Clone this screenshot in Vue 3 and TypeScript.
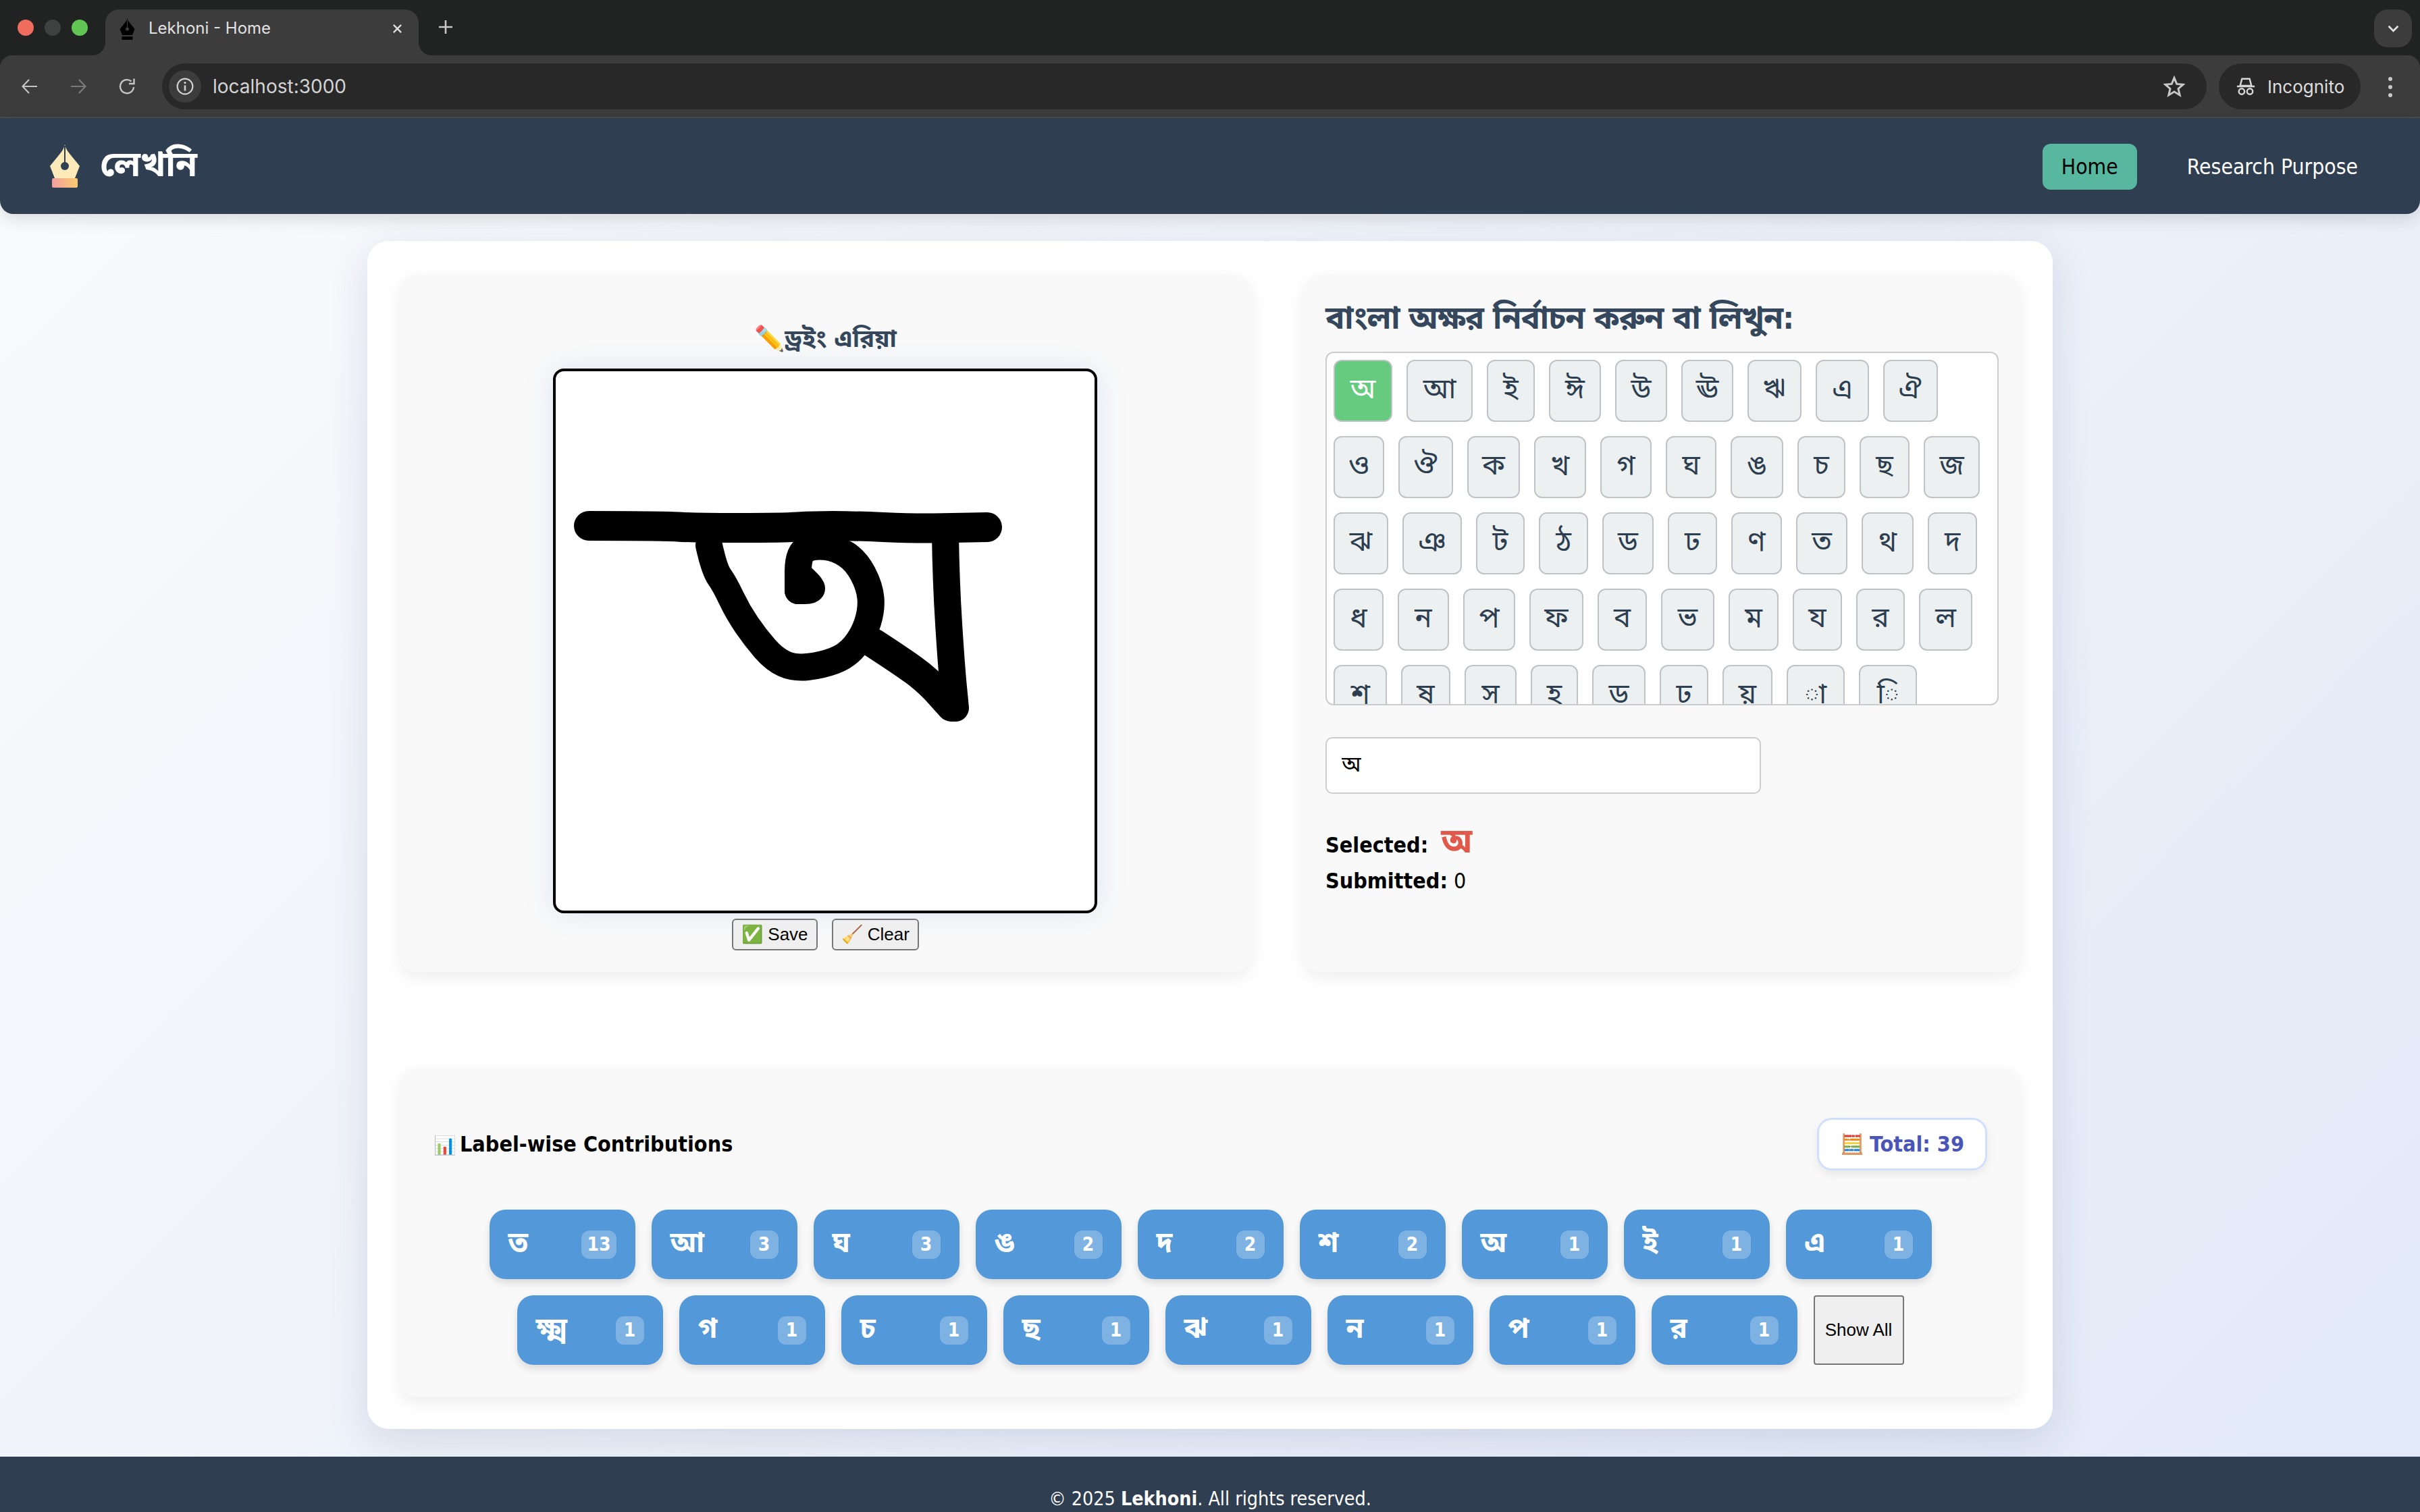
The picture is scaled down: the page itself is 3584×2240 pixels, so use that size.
<script setup lang="ts">
interface Letter {
	ch: string
	w: number
}

interface Chip {
	label: string
	count: number
}

interface Stroke {
	d: string
	width: number
}

type Point = [number, number]

const letter = (ch: string, w: number): Letter => ({ ch, w })

const letters: Letter[] = [
	letter("অ", 87), letter("আ", 98), letter("ই", 71), letter("ঈ", 77), letter("উ", 77), letter("ঊ", 77), letter("ঋ", 80), letter("এ", 79), letter("ঐ", 81),
	letter("ও", 75), letter("ঔ", 81), letter("ক", 78), letter("খ", 77), letter("গ", 76), letter("ঘ", 75), letter("ঙ", 78), letter("চ", 71), letter("ছ", 74), letter("জ", 83),
	letter("ঝ", 81), letter("ঞ", 88), letter("ট", 72), letter("ঠ", 73), letter("ড", 76), letter("ঢ", 73), letter("ণ", 75), letter("ত", 76), letter("থ", 77), letter("দ", 73),
	letter("ধ", 74), letter("ন", 76), letter("প", 77), letter("ফ", 80), letter("ব", 73), letter("ভ", 79), letter("ম", 74), letter("য", 73), letter("র", 72), letter("ল", 79),
	letter("শ", 79), letter("ষ", 73), letter("স", 77), letter("হ", 70), letter("ড়", 79), letter("ঢ়", 72), letter("য়", 74), letter("া", 86), letter("ি", 86),
]

const chips: Chip[] = [
	{ label: "ত", count: 13 }, { label: "আ", count: 3 }, { label: "ঘ", count: 3 },
	{ label: "ঙ", count: 2 }, { label: "দ", count: 2 }, { label: "শ", count: 2 },
	{ label: "অ", count: 1 }, { label: "ই", count: 1 }, { label: "এ", count: 1 },
	{ label: "ক্ষ্ম", count: 1 }, { label: "গ", count: 1 }, { label: "চ", count: 1 },
	{ label: "ছ", count: 1 }, { label: "ঝ", count: 1 }, { label: "ন", count: 1 },
	{ label: "প", count: 1 }, { label: "র", count: 1 },
]

// turns the sampled pen positions into a smooth stroke, like the drawing canvas does
const smooth = (pts: Point[]): string => {
	let d = `M${pts[0][0]} ${pts[0][1]}`
	for (let i = 1; i < pts.length - 1; i++) {
		const mx = (pts[i][0] + pts[i + 1][0]) / 2
		const my = (pts[i][1] + pts[i + 1][1]) / 2
		d += ` Q${pts[i][0]} ${pts[i][1]} ${mx} ${my}`
	}
	const last = pts[pts.length - 1]
	return `${d} L${last[0]} ${last[1]}`
}

const strokes: Stroke[] = [
	{ width: 44, d: smooth([[49, 229], [158, 229], [204, 232], [336, 232], [382, 229], [439, 229], [531, 233], [589, 232], [639, 231]]) },
	{ width: 40, d: smooth([[227, 258], [235, 294], [250, 315], [270, 357], [296, 395], [324, 427], [353, 440], [393, 436], [431, 422], [456, 391], [468, 353], [465, 319], [445, 281], [416, 262], [382, 258], [359, 269], [359, 325]]) },
	{ width: 40, d: smooth([[359, 300], [379, 318], [379, 325], [359, 325]]) },
	{ width: 44, d: smooth([[471, 403], [511, 429], [551, 458], [586, 497]]) },
	{ width: 40, d: smooth([[577, 243], [578, 311], [586, 437], [592, 499]]) },
]
</script>

<template>
	<div class="browser">
		<div class="tabstrip">
			<div class="lights">
				<span class="light red"></span>
				<span class="light grey"></span>
				<span class="light green"></span>
			</div>
			<div class="tab">
				<svg class="favicon" viewBox="0 0 44 64">
					<path d="M22 0 C24 8 27 11 31 16 L44 32 L37 50 H7 L0 32 L13 16 C17 11 20 8 22 0 Z" fill="#000" />
					<path d="M22 4 V28" stroke="#3c3c3c" stroke-width="2" />
					<circle cx="22" cy="32" r="5" fill="#3c3c3c" />
					<rect x="6" y="54" width="32" height="10" fill="#000" />
				</svg>
				<span class="tab-title">Lekhoni - Home</span>
				<svg class="tab-close" viewBox="0 0 16 16">
					<path d="M2 2 L14 14 M14 2 L2 14" stroke="#e0e0e0" stroke-width="2.4" fill="none" />
				</svg>
			</div>
			<svg class="tab-new" viewBox="0 0 20 20">
				<path d="M10 0 V20 M0 10 H20" stroke="#c8c8c8" stroke-width="2.6" fill="none" />
			</svg>
			<div class="tab-menu">
				<svg viewBox="0 0 16 10" width="17" height="11">
					<path d="M1.5 1.5 L8 8 L14.5 1.5" stroke="#e0e0e0" stroke-width="2.6" fill="none" />
				</svg>
			</div>
		</div>
		<div class="toolbar">
			<svg class="tool" viewBox="0 0 24 24">
				<path d="M23 12 H2 M11 2 L1.5 12 L11 22" stroke="#c4c4c4" stroke-width="2.2" fill="none" />
			</svg>
			<svg class="tool" viewBox="0 0 24 24">
				<path d="M1 12 H22 M13 2 L22.5 12 L13 22" stroke="#7b7b7b" stroke-width="2.2" fill="none" />
			</svg>
			<svg class="tool" viewBox="0 0 24 24">
				<path d="M22 13 A10 10 0 1 1 18.5 4.5 M22.5 0.5 V8 H15" stroke="#c4c4c4" stroke-width="2.4" fill="none" />
			</svg>
			<div class="omnibox">
				<span class="site-info">
					<svg viewBox="0 0 24 24" width="26" height="26">
						<circle cx="12" cy="12" r="10.5" stroke="#d0d0d0" stroke-width="2" fill="none" />
						<path d="M12 10.5 V18" stroke="#d0d0d0" stroke-width="2.4" />
						<circle cx="12" cy="7" r="1.5" fill="#d0d0d0" />
					</svg>
				</span>
				<span class="url">localhost:3000</span>
				<svg class="star" viewBox="0 0 24 24">
					<path d="M12 2.5 L14.8 9.3 L22 9.9 L16.5 14.6 L18.2 21.7 L12 17.9 L5.8 21.7 L7.5 14.6 L2 9.9 L9.2 9.3 Z" stroke="#c8c8c8" stroke-width="2.2" fill="none" />
				</svg>
			</div>
			<div class="incognito">
				<svg viewBox="0 0 30 30" width="28" height="28">
					<path d="M9 3 H21 L24 14 H6 Z M1 15 H29" stroke="#d8d8d8" stroke-width="2.6" fill="none" />
					<circle cx="8.5" cy="23" r="4.5" stroke="#d8d8d8" stroke-width="2.6" fill="none" />
					<circle cx="21.5" cy="23" r="4.5" stroke="#d8d8d8" stroke-width="2.6" fill="none" />
				</svg>
				<span>Incognito</span>
			</div>
			<div class="dots"><i></i><i></i><i></i></div>
		</div>
	</div>

	<nav class="navbar">
		<div class="brand">
			<svg class="brand-logo" viewBox="0 0 44 64">
				<defs>
					<linearGradient id="nibBase" x1="0" y1="0" x2="1" y2="0">
						<stop offset="0" stop-color="#f29da0" />
						<stop offset="1" stop-color="#f9cc6c" />
					</linearGradient>
				</defs>
				<path d="M22 0 C24 8 27 11 31 16 L44 32 L37 50 H7 L0 32 L13 16 C17 11 20 8 22 0 Z" fill="#fdeab9" />
				<path d="M22 2 V28" stroke="#324054" stroke-width="2" />
				<circle cx="22" cy="32" r="6" fill="#324054" />
				<rect x="3" y="50" width="38" height="14" rx="2" fill="url(#nibBase)" />
			</svg>
			<span class="brand-name">লেখনি</span>
		</div>
		<div class="nav-links">
			<a class="nav-link active">Home</a>
			<a class="nav-link">Research Purpose</a>
		</div>
	</nav>

	<main class="page-card">
		<div class="top-row">
			<section class="panel draw-panel">
				<h2 class="draw-title">✏️ড্রইং এরিয়া</h2>
				<div class="canvas">
					<svg viewBox="0 0 798 799" width="798" height="799" fill="none" stroke="#000" stroke-linecap="round" stroke-linejoin="round">
						<path v-for="(s, i) in strokes" :key="i" :d="s.d" :stroke-width="s.width" />
					</svg>
				</div>
				<div class="draw-actions">
					<button class="native-btn">✅ Save</button>
					<button class="native-btn">🧹 Clear</button>
				</div>
			</section>

			<section class="panel letter-panel">
				<h2 class="letter-title">বাংলা অক্ষর নির্বাচন করুন বা লিখুন:</h2>
				<div class="letter-grid">
					<button
						v-for="(item, i) in letters"
						:key="item.ch"
						class="letter-btn"
						:class="{ selected: i === 0 }"
						:style="{ width: item.w + 'px' }">
						{{ item.ch }}
					</button>
				</div>
				<input class="letter-input" type="text" value="অ" />
				<div class="status">
					<p class="status-line selected-line"><b>Selected:</b> <span class="selected-char">অ</span></p>
					<p class="status-line"><b>Submitted:</b> 0</p>
				</div>
			</section>
		</div>

		<section class="panel chips-panel">
			<header class="chips-head">
				<h3 class="chips-title"><span class="title-emoji">📊</span> Label-wise Contributions</h3>
				<div class="total-badge"><span class="total-emoji">🧮</span> Total: 39</div>
			</header>
			<div class="chips">
				<div v-for="chip in chips" :key="chip.label" class="chip">
					<span class="chip-label">{{ chip.label }}</span>
					<span class="chip-count">{{ chip.count }}</span>
				</div>
				<button class="native-btn show-all">Show All</button>
			</div>
		</section>
	</main>

	<footer class="footer">© 2025 <b>Lekhoni</b>. All rights reserved.</footer>
</template>

<style>
html,
body {
	margin: 0;
	height: 100%;
	overflow: hidden;
}

body {
	background: linear-gradient(135deg, #fafbfc 0%, #e2e9f7 100%);
}
</style>

<style scoped>
.browser {
	font-family: Inter, "Noto Sans", sans-serif;
	background: #212322;
}

.tabstrip {
	height: 82px;
	display: flex;
	align-items: flex-start;
	padding: 14px 12px 0 26px;
	box-sizing: border-box;
}

.lights {
	display: flex;
	gap: 16px;
	padding-top: 15px;
	margin-right: 26px;
}

.light {
	width: 24px;
	height: 24px;
	border-radius: 50%;
}

.red { background: #ef6c5f; }
.grey { background: #3f4140; }
.green { background: #61c554; }

.tab {
	position: relative;
	width: 464px;
	height: 68px;
	border-radius: 20px 20px 0 0;
	background: #3c3c3c;
	display: flex;
	align-items: flex-start;
	box-sizing: border-box;
	padding: 13px 24px 0 21px;
}

/* the flared corners where the tab meets the toolbar */
.tab::before,
.tab::after {
	content: "";
	position: absolute;
	bottom: 0;
	width: 20px;
	height: 20px;
}

.tab::before {
	left: -20px;
	background: radial-gradient(circle at 0 0, transparent 20px, #3c3c3c 20.5px);
}

.tab::after {
	right: -20px;
	background: radial-gradient(circle at 100% 0, transparent 20px, #3c3c3c 20.5px);
}

.favicon {
	width: 23px;
	height: 32px;
	margin-right: 20px;
}

.tab-title {
	flex: 1;
	font-size: 24px;
	line-height: 30px;
	color: #e2e2e2;
}

.tab-close {
	width: 15px;
	height: 15px;
	margin-top: 8px;
}

.tab-new {
	width: 20px;
	height: 20px;
	margin: 16px 0 0 30px;
}

.tab-menu {
	margin-left: auto;
	width: 56px;
	height: 56px;
	border-radius: 20px;
	background: #3c3c3c;
	display: flex;
	align-items: center;
	justify-content: center;
}

.toolbar {
	height: 93px;
	background: #3c3c3c;
	border-bottom: 2px solid #4a4a4a;
	border-radius: 18px 18px 0 0;
	box-sizing: border-box;
	display: flex;
	align-items: flex-start;
	padding: 12px 0 0 32px;
}

.tool {
	width: 24px;
	height: 24px;
	margin: 22px 48px 0 0;
}

.tool:nth-of-type(3) {
	margin-right: 46px;
}

.omnibox {
	flex: 0 0 3028px;
	height: 68px;
	border-radius: 34px;
	background: #282828;
	display: flex;
	align-items: center;
	padding: 0 32px 0 10px;
	box-sizing: border-box;
	margin-left: -6px;
}

.site-info {
	width: 48px;
	height: 48px;
	border-radius: 50%;
	background: #3c3c3c;
	display: flex;
	align-items: center;
	justify-content: center;
	margin-right: 17px;
}

.url {
	flex: 1;
	font-size: 28px;
	color: #d4d4d4;
}

.star {
	width: 32px;
	height: 32px;
}

.incognito {
	width: 210px;
	height: 68px;
	margin-left: 18px;
	border-radius: 34px;
	background: #282828;
	display: flex;
	align-items: center;
	gap: 18px;
	padding-left: 26px;
	box-sizing: border-box;
	font-size: 26px;
	color: #dedede;
}

.dots {
	display: flex;
	flex-direction: column;
	gap: 6px;
	margin: 20px 0 0 41px;
}

.dots i {
	width: 6px;
	height: 6px;
	border-radius: 50%;
	background: #c8c8c8;
}

.navbar {
	height: 142px;
	background: #2f3e50;
	border-radius: 0 0 20px 20px;
	box-shadow: 0 8px 24px rgba(0, 0, 0, 0.12);
	display: flex;
	align-items: center;
	justify-content: space-between;
	padding: 0 64px 0 74px;
	box-sizing: border-box;
}

.brand {
	display: flex;
	align-items: center;
	gap: 30px;
}

.brand-logo {
	width: 44px;
	height: 64px;
}

.brand-name {
	font-family: "Noto Sans Bengali", "Noto Sans", sans-serif;
	font-size: 52px;
	font-weight: 700;
	color: #fff;
	padding-top: 3px;
}

.nav-links {
	display: flex;
	align-items: center;
	gap: 46px;
	margin-top: 2px;
	font-family: "DejaVu Sans", sans-serif;
	font-stretch: condensed;
	font-size: 31.6px;
}

.nav-link {
	color: #fff;
	padding: 16px 28px;
	border-radius: 12px;
}

.nav-link.active {
	background: #58b89f;
	color: #000;
}

.page-card {
	width: 2496px;
	height: 1760px;
	margin: 40px auto 41px;
	background: #fff;
	border-radius: 32px;
	box-shadow: 0 16px 60px rgba(40, 60, 110, 0.14);
	box-sizing: border-box;
	padding: 50px 48px;
	font-family: "DejaVu Sans", "Noto Sans Bengali", sans-serif;
	font-stretch: condensed;
}

.top-row {
	display: grid;
	grid-template-columns: 1261px 1061px;
	column-gap: 78px;
}

.panel {
	background: #f9f9f9;
	border-radius: 24px;
	box-shadow: 0 8px 24px rgba(0, 0, 0, 0.07);
	box-sizing: border-box;
}

.draw-panel {
	height: 1033px;
	display: flex;
	flex-direction: column;
	align-items: center;
	padding-top: 70px;
}

.draw-title {
	margin: 0 0 44px;
	font-size: 36.5px;
	line-height: 50px;
	height: 25px;
	font-weight: 700;
	color: #34475c;
}

.canvas {
	width: 806px;
	height: 807px;
	margin-left: -2px;
	border: 4px solid #000;
	border-radius: 16px;
	background: #fff;
	box-sizing: border-box;
	box-shadow: 0 0 44px rgba(60, 130, 210, 0.14);
}

.canvas svg {
	display: block;
}

.draw-actions {
	display: flex;
	gap: 21px;
	margin-top: 8px;
}

.native-btn {
	font-family: "Liberation Sans", sans-serif;
	font-size: 26px;
	height: 47px;
	padding: 0 12px;
	color: #000;
	background: #efefef;
	border: 2px solid #767676;
	border-radius: 6px;
}

.letter-panel {
	padding: 34px 32px 0;
}

.letter-title {
	margin: 0 0 20px;
	font-size: 47px;
	line-height: 60px;
	letter-spacing: -0.95px;
	font-weight: 700;
	color: #34475c;
}

.letter-grid {
	height: 524px;
	overflow: hidden;
	border: 2px solid #ccc;
	border-radius: 12px;
	background: #fff;
	box-sizing: border-box;
	padding: 10px;
	display: flex;
	flex-wrap: wrap;
	align-content: flex-start;
	gap: 21px;
}

.letter-btn {
	height: 92px;
	padding: 0;
	font-family: "Noto Sans Bengali", sans-serif;
	font-size: 42px;
	color: #2c3e50;
	background: #ecf0f1;
	border: 2px solid #bdc3c7;
	border-radius: 12px;
}

.letter-btn.selected {
	background: #66cb7e;
	color: #fff;
}

.letter-input {
	display: block;
	width: 645px;
	height: 84px;
	margin-top: 47px;
	padding: 2px 22px 0;
	border: 2px solid #ccc;
	border-radius: 10px;
	box-sizing: border-box;
	font-family: "Noto Sans Bengali", sans-serif;
	font-size: 32px;
	color: #000;
	background: #fff;
}

.status {
	margin-top: 50px;
	font-size: 32px;
	color: #000;
}

.status-line {
	margin: 0;
	line-height: 53px;
}

.selected-char {
	font-size: 50px;
	font-weight: 700;
	color: #e0594a;
	margin-left: 10px;
	line-height: 40px;
}

.chips-panel {
	margin-top: 142px;
	height: 488px;
	padding: 74px 49px 0 50px;
}

.chips-head {
	display: flex;
	align-items: center;
	justify-content: space-between;
	height: 78px;
}

.chips-title {
	margin: 0;
	font-size: 32px;
	font-weight: 700;
	color: #000;
}

.title-emoji {
	font-size: 27px;
	margin-right: -5px;
}

.total-badge {
	height: 78px;
	width: 252px;
	border: 3px solid #cfe0ff;
	border-radius: 22px;
	background: #fff;
	box-shadow: 0 6px 14px rgba(0, 0, 0, 0.07);
	box-sizing: border-box;
	font-size: 32px;
	font-weight: 700;
	color: #4a55b8;
	display: flex;
	align-items: center;
	justify-content: center;
	gap: 8px;
}

.total-emoji {
	font-size: 29px;
}

.chips {
	margin-top: 58px;
	display: flex;
	flex-wrap: wrap;
	justify-content: center;
	gap: 24px;
}

.chip {
	width: 216px;
	height: 103px;
	padding: 0 28px;
	box-sizing: border-box;
	background: #5398d8;
	border-radius: 24px;
	box-shadow: 0 6px 12px rgba(0, 0, 0, 0.12);
	display: flex;
	align-items: center;
	justify-content: space-between;
	color: #fff;
}

.chip-label {
	font-family: "Noto Sans Bengali", sans-serif;
	font-size: 42px;
	font-weight: 700;
}

.chip-count {
	min-width: 42px;
	height: 42px;
	line-height: 42px;
	padding: 0 8px;
	box-sizing: border-box;
	text-align: center;
	font-size: 28px;
	font-weight: 700;
	background: rgba(255, 255, 255, 0.25);
	border-radius: 12px;
}

.show-all {
	width: 134px;
	height: 103px;
	padding: 0;
	border-radius: 4px;
}

.footer {
	height: 120px;
	padding-top: 46px;
	box-sizing: border-box;
	background: #2f3e50;
	color: #fff;
	text-align: center;
	font-family: "DejaVu Sans", sans-serif;
	font-stretch: condensed;
	font-size: 28.4px;
}
</style>
